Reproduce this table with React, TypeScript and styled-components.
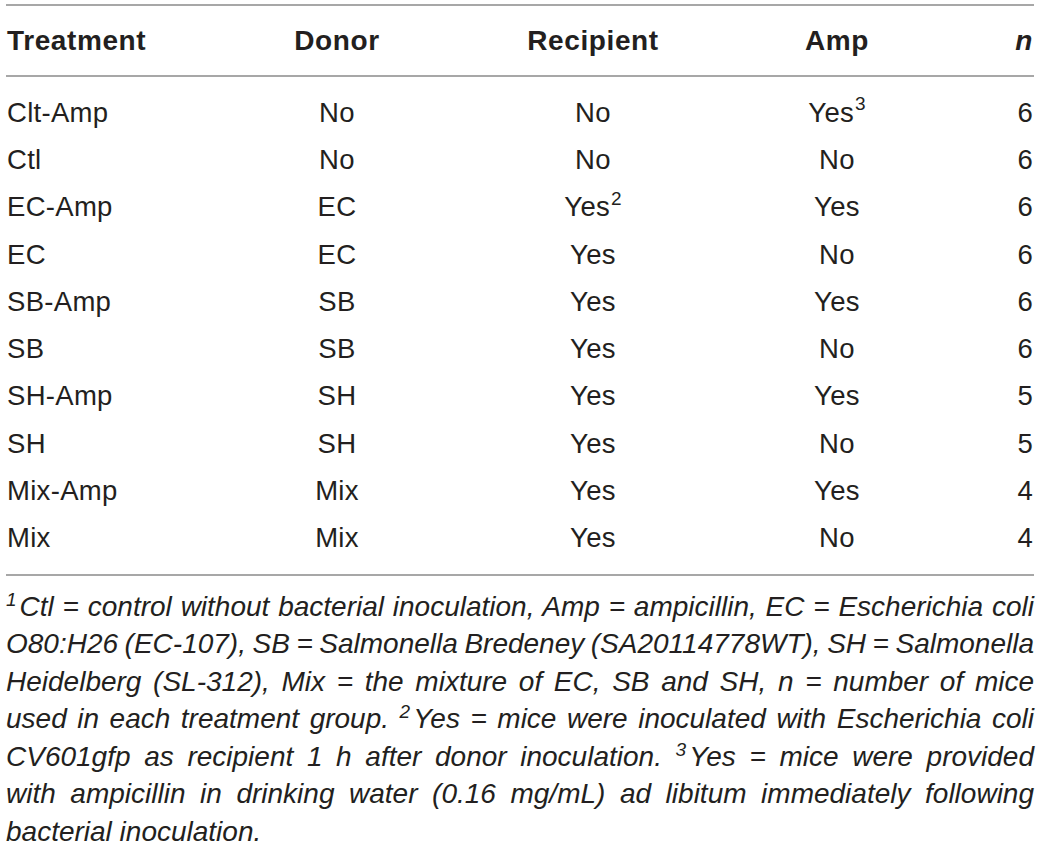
import React from "react";
import styled, { createGlobalStyle } from "styled-components";

const Global = createGlobalStyle`
  html, body { margin: 0; padding: 0; background: #ffffff; }
  body { font-family: "Liberation Sans", Arial, sans-serif; color: #231f20; }
`;

const Page = styled.div`
  width: 1028px;
  padding: 4px 7px 0 6px;
`;

const Table = styled.div`
  display: grid;
  grid-template-columns: 224px 214px 298px 190px 102px;
  border-top: 2px solid #a7a7a7;
  border-bottom: 2px solid #a7a7a7;
`;

const HeadRow = styled.div`
  display: contents;
`;

const Cell = styled.div<{ $align: "left" | "center" | "right"; $head?: boolean; $italic?: boolean }>`
  display: flex;
  align-items: center;
  justify-content: ${(p) => (p.$align === "left" ? "flex-start" : p.$align === "right" ? "flex-end" : "center")};
  height: ${(p) => (p.$head ? "69px" : "47.3px")};
  font-size: ${(p) => (p.$head ? "28px" : "27.5px")};
  letter-spacing: ${(p) => (p.$head ? "0.6px" : "0.3px")};
  font-weight: ${(p) => (p.$head ? 700 : 400)};
  font-style: ${(p) => (p.$italic ? "italic" : "normal")};
  padding-left: ${(p) => (p.$align === "left" ? "1px" : "0")};
  padding-right: ${(p) => (p.$align === "right" ? "1px" : "0")};
  white-space: nowrap;
`;

const Divider = styled.div`
  grid-column: 1 / -1;
  border-top: 2px solid #a7a7a7;
  height: 12px;
`;

const Spacer = styled.div`
  grid-column: 1 / -1;
  height: 12px;
`;

const Sup = styled.sup`
  font-size: 19px;
  line-height: 0;
  letter-spacing: 0;
  vertical-align: super;
  position: relative;
  top: -1px;
  margin-left: 1px;
`;

const Notes = styled.div`
  padding-top: 12px;
  font-size: 28px;
  font-style: italic;
  line-height: 37.5px;
`;

const NoteLine = styled.div<{ $last?: boolean; $tight?: boolean }>`
  text-align: justify;
  text-align-last: ${(p) => (p.$last ? "left" : "justify")};
  white-space: nowrap;
  word-spacing: ${(p) => (p.$tight ? "-2px" : "0")};
`;

const NoteSup = styled.sup`
  font-size: 19px;
  line-height: 0;
  vertical-align: super;
  margin-right: 3px;
`;

type Row = { t: string; d: string; r: string; a: string; n: string; rs?: string; as?: string };

const rows: Row[] = [
  { t: "Clt-Amp", d: "No", r: "No", a: "Yes", as: "3", n: "6" },
  { t: "Ctl", d: "No", r: "No", a: "No", n: "6" },
  { t: "EC-Amp", d: "EC", r: "Yes", rs: "2", a: "Yes", n: "6" },
  { t: "EC", d: "EC", r: "Yes", a: "No", n: "6" },
  { t: "SB-Amp", d: "SB", r: "Yes", a: "Yes", n: "6" },
  { t: "SB", d: "SB", r: "Yes", a: "No", n: "6" },
  { t: "SH-Amp", d: "SH", r: "Yes", a: "Yes", n: "5" },
  { t: "SH", d: "SH", r: "Yes", a: "No", n: "5" },
  { t: "Mix-Amp", d: "Mix", r: "Yes", a: "Yes", n: "4" },
  { t: "Mix", d: "Mix", r: "Yes", a: "No", n: "4" },
];

export default function App() {
  return (
    <Page>
      <Global />
      <Table>
        <HeadRow>
          <Cell $align="left" $head>Treatment</Cell>
          <Cell $align="center" $head>Donor</Cell>
          <Cell $align="center" $head>Recipient</Cell>
          <Cell $align="center" $head>Amp</Cell>
          <Cell $align="right" $head $italic>n</Cell>
        </HeadRow>
        <Divider />
        {rows.map((r) => (
          <React.Fragment key={r.t}>
            <Cell $align="left">{r.t}</Cell>
            <Cell $align="center">{r.d}</Cell>
            <Cell $align="center">
              <span>
                {r.r}
                {r.rs && <Sup>{r.rs}</Sup>}
              </span>
            </Cell>
            <Cell $align="center">
              <span>
                {r.a}
                {r.as && <Sup>{r.as}</Sup>}
              </span>
            </Cell>
            <Cell $align="right">{r.n}</Cell>
          </React.Fragment>
        ))}
        <Spacer />
      </Table>
      <Notes>
        <NoteLine>
          <NoteSup>1</NoteSup>Ctl = control without bacterial inoculation, Amp = ampicillin, EC = Escherichia coli
        </NoteLine>
        <NoteLine $tight>O80:H26 (EC-107), SB = Salmonella Bredeney (SA20114778WT), SH = Salmonella</NoteLine>
        <NoteLine>Heidelberg (SL-312), Mix = the mixture of EC, SB and SH, n = number of mice</NoteLine>
        <NoteLine>
          used in each treatment group. <NoteSup>2</NoteSup>Yes = mice were inoculated with Escherichia coli
        </NoteLine>
        <NoteLine>
          CV601gfp as recipient 1 h after donor inoculation. <NoteSup>3</NoteSup>Yes = mice were provided
        </NoteLine>
        <NoteLine>with ampicillin in drinking water (0.16 mg/mL) ad libitum immediately following</NoteLine>
        <NoteLine $last>bacterial inoculation.</NoteLine>
      </Notes>
    </Page>
  );
}
